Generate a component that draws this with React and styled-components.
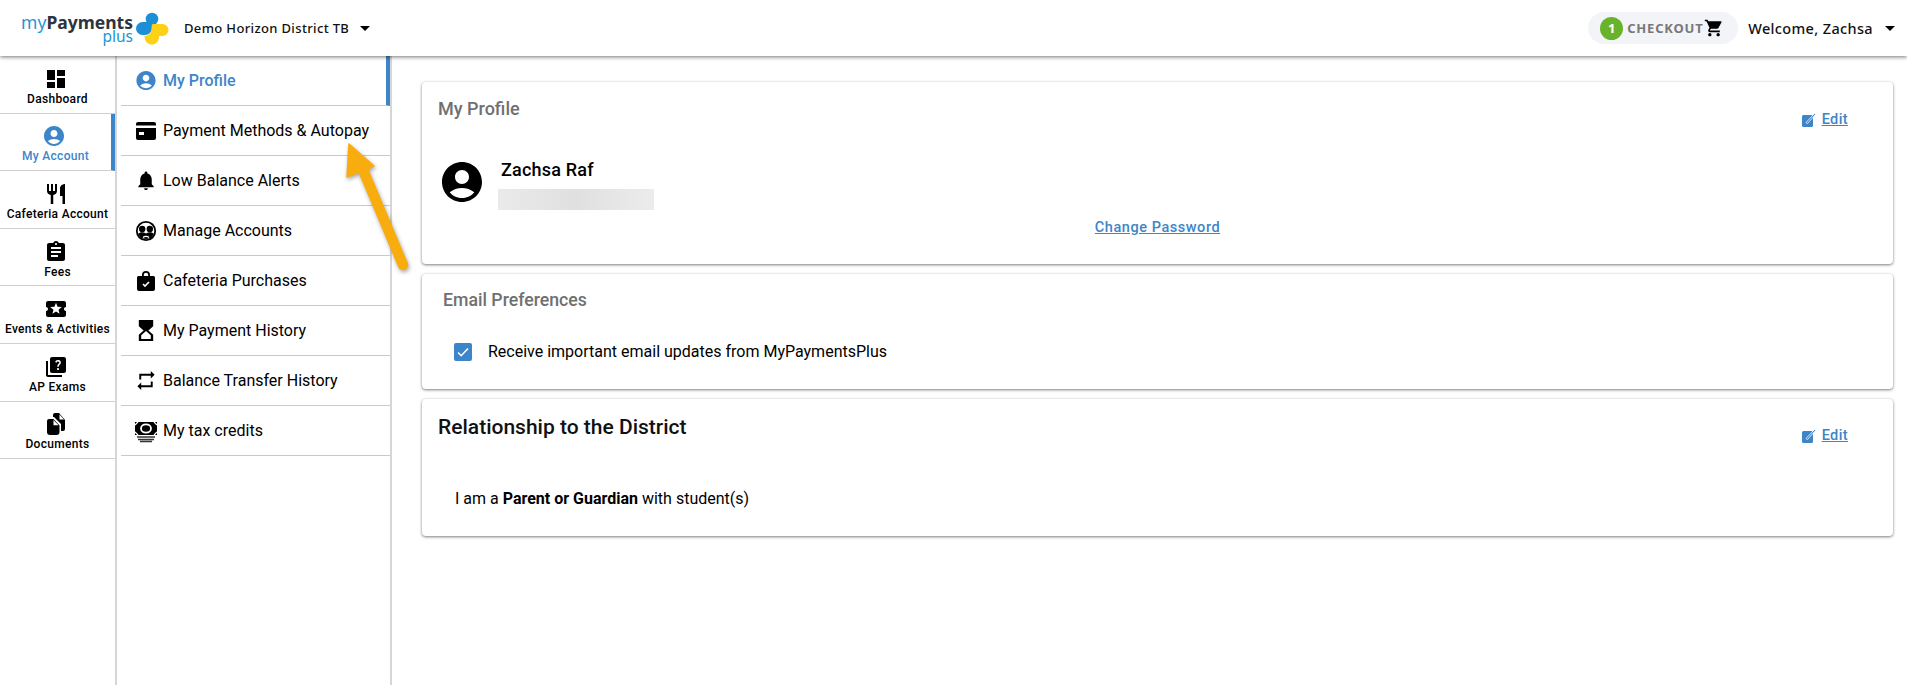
import React from 'react';
import styled, { createGlobalStyle } from 'styled-components';
import {
  MdDashboard,
  MdAccountCircle,
  MdRestaurant,
  MdAssignment,
  MdLocalActivity,
  MdQuiz,
  MdNotifications,
  MdHourglassTop,
  MdRepeat,
  MdShoppingCart,
  MdArrowDropDown,
} from 'react-icons/md';

const BLUE = '#3d85c9';

const GlobalStyle = createGlobalStyle`
  html, body {
    margin: 0;
    padding: 0;
    background: #fff;
    font-family: Roboto, "Liberation Sans", sans-serif;
    color: #000;
  }
  * {
    box-sizing: border-box;
  }
`;

const Page = styled.div`
  position: relative;
  width: 1907px;
  height: 685px;
  overflow: hidden;
  display: flex;
  flex-direction: column;
`;

const Header = styled.header`
  position: relative;
  z-index: 2;
  flex: 0 0 56px;
  display: flex;
  align-items: center;
  padding: 0 5px 0 18px;
  background: #fff;
  box-shadow: 0 1px 4px rgba(0, 0, 0, 0.55);
`;

const LogoWrap = styled.div`
  display: flex;
  align-items: center;
  width: 166px;
  gap: 2px;
`;

const LogoText = styled.div`
  display: flex;
  flex-direction: column;
  align-items: flex-end;
  width: 115px;
  margin-top: 1px;
  font-family: "Noto Sans", sans-serif;
`;

const LogoMain = styled.div`
  font-size: 17.5px;
  font-weight: 700;
  color: #2c3440;
  line-height: 16px;
  white-space: nowrap;

  & span {
    color: #1d96d6;
    font-weight: 400;
  }
`;

const LogoSub = styled.div`
  font-size: 15.5px;
  color: #1d96d6;
  line-height: 13px;
`;

const HeaderLabel = styled.span`
  font-family: "Noto Sans", sans-serif;
  font-size: ${(props) => props.$size || '13px'};
  font-weight: 500;
  letter-spacing: 0.35px;
  color: #111;
  white-space: nowrap;
`;

const Caret = styled(MdArrowDropDown)`
  font-size: 24px;
  margin-left: ${(props) => props.$gap || '5px'};
`;

const Spacer = styled.div`
  flex: 1;
`;

const CheckoutPill = styled.div`
  display: flex;
  align-items: center;
  width: 150px;
  height: 32px;
  padding-left: 12px;
  margin-right: 10px;
  border-radius: 16px;
  background: #f2f4f8;
`;

const CountBadge = styled.span`
  display: flex;
  align-items: center;
  justify-content: center;
  width: 23px;
  height: 23px;
  border-radius: 50%;
  background: #68b32a;
  color: #fff;
  font-size: 13px;
  font-weight: 700;
  font-family: "Noto Sans", sans-serif;
`;

const CheckoutText = styled.span`
  margin-left: 4px;
  font-size: 13px;
  font-weight: 700;
  letter-spacing: 0.8px;
  color: #78777a;
  font-family: "Noto Sans", sans-serif;
`;

const Body = styled.div`
  flex: 1;
  display: flex;
  min-height: 0;
`;

const Rail = styled.nav`
  flex: 0 0 117px;
  border-right: 2px solid #d6d6d6;
`;

const RailItem = styled.div`
  height: 57.6px;
  padding-top: 4px;
  display: flex;
  flex-direction: column;
  align-items: center;
  justify-content: center;
  gap: 1px;
  border-bottom: 1px solid #cfcfcf;
  border-right: ${(props) => (props.$active ? `4px solid ${BLUE}` : 'none')};
  color: ${(props) => (props.$active ? BLUE : '#000')};
  font-size: 12px;
  font-weight: 500;
  letter-spacing: 0.3px;
  white-space: nowrap;

  & svg {
    font-size: 24px;
    margin-right: 4px;
  }
`;

const SubNav = styled.nav`
  flex: 0 0 275px;
  padding-left: 4px;
  border-right: 2px solid #d6d6d6;
`;

const SubItem = styled.div`
  height: 50px;
  display: flex;
  align-items: center;
  gap: 5px;
  padding-left: 13px;
  border-bottom: 1px solid #c9c9c9;
  border-right: ${(props) => (props.$active ? `4px solid ${BLUE}` : 'none')};
  color: ${(props) => (props.$active ? BLUE : '#000')};
  font-size: 16px;
  font-weight: ${(props) => (props.$active ? 500 : 400)};

  & svg {
    flex: 0 0 24px;
    font-size: 23px;
  }
`;

const HistoryIcon = styled(MdHourglassTop)`
  transform: scale(1.25, 1.1);
`;

const Main = styled.main`
  flex: 1;
  display: flex;
  flex-direction: column;
  gap: 10px;
  padding: 26px 14px 0 30px;
`;

const Card = styled.section`
  position: relative;
  height: ${(props) => props.$height};
  padding: ${(props) => props.$padding || '16px 16px'};
  border-radius: 4px;
  background: #fff;
  box-shadow: 0 1px 3px rgba(0, 0, 0, 0.5), 0 0 2px rgba(0, 0, 0, 0.06);
`;

const CardTitle = styled.h2`
  margin: 0;
  font-size: ${(props) => props.$size || '18px'};
  line-height: 22px;
  font-weight: 500;
  color: ${(props) => props.$color || '#707070'};
`;

const EditLink = styled.a`
  position: absolute;
  top: ${(props) => props.$top};
  right: 45px;
  display: flex;
  align-items: center;
  gap: 6px;
  color: ${BLUE};
  font-size: 14.5px;
  font-weight: 500;
  letter-spacing: 0.4px;
  text-decoration: underline;
`;

const ProfileRow = styled.div`
  display: flex;
  align-items: flex-start;
  gap: 12px;
  margin-top: 38px;
`;

const AvatarIcon = styled(MdAccountCircle)`
  flex: 0 0 48px;
  font-size: 48px;
`;

const ProfileInfo = styled.div`
  padding-top: 1px;
`;

const ProfileName = styled.div`
  padding-left: 3px;
  font-size: 18px;
  font-weight: 500;
  line-height: 22px;
  letter-spacing: 0.2px;
`;

const RedactedBlock = styled.div`
  width: 156px;
  height: 21px;
  margin-top: 8px;
  background: linear-gradient(90deg, #eaeaea 0%, #e0e0e0 50%, #ececec 100%);
`;

const PasswordLink = styled.a`
  display: block;
  margin-top: 10px;
  text-align: center;
  line-height: 16px;
  color: ${BLUE};
  font-size: 14.5px;
  font-weight: 500;
  letter-spacing: 0.55px;
  text-decoration: underline;
`;

const CheckRow = styled.div`
  display: flex;
  align-items: center;
  gap: 16px;
  margin-top: 31px;
  padding-left: 11px;
  font-size: 16px;
  line-height: 20px;
`;

const CheckBox = styled.span`
  display: flex;
  align-items: center;
  justify-content: center;
  width: 18px;
  height: 18px;
  border-radius: 2px;
  background: ${BLUE};
`;

const RelationText = styled.p`
  margin: 51px 0 0 17px;
  font-size: 16px;
  line-height: 20px;

  & b {
    font-weight: 700;
  }
`;

// annotation drawn on top of the screenshot
const ArrowOverlay = styled.svg`
  position: absolute;
  left: 340px;
  top: 135px;
  width: 70px;
  height: 150px;
  z-index: 3;
  filter: drop-shadow(1px 2px 2px rgba(0, 0, 0, 0.35));
`;

function LogoMark() {
  return (
    <svg width="34" height="33" viewBox="0 0 34 33">
      <circle cx="17" cy="7" r="6.3" fill="#1d8fd6" />
      <path d="M1 16.5a6.5 6.5 0 0 1 6.5-6.5H17v6a7 7 0 0 1-7 7H7.5A6.5 6.5 0 0 1 1 16.5z" fill="#1d8fd6" />
      <path
        d="M19 12h8.5a6 6 0 0 1 0 12H24v1.5a7.2 7.2 0 0 1-14.4 0V24a7 7 0 0 0 7-7v-3a2 2 0 0 1 2.4-2z"
        fill="#fcd116"
      />
    </svg>
  );
}

function EditIcon() {
  return (
    <svg width="14" height="15" viewBox="0 0 14 15">
      <rect x="0" y="3" width="11" height="12" rx="1.5" fill={BLUE} />
      <path d="M4 10.5 L12.5 1.5 L13.5 2.5 L5.5 11.5 Z" fill={BLUE} stroke="#fff" strokeWidth="0.8" />
    </svg>
  );
}

function CardIcon() {
  return (
    <svg viewBox="0 0 24 24" width="24" height="24">
      <path
        d="M4 3h16a2 2 0 0 1 2 2v1.5H2V5a2 2 0 0 1 2-2zM2 9h20v10a2 2 0 0 1-2 2H4a2 2 0 0 1-2-2zM5 13v3h5v-3z"
        fill="#000"
        fillRule="evenodd"
      />
    </svg>
  );
}

function ManageIcon() {
  return (
    <svg viewBox="0 0 24 24" width="24" height="24">
      <circle cx="12" cy="12" r="9.2" fill="none" stroke="#000" strokeWidth="1.8" />
      <circle cx="8.2" cy="10" r="3.2" fill="#000" />
      <circle cx="15.8" cy="10" r="3.2" fill="#000" />
      <path d="M4 15c2-2 5-2.2 8-0.5 3-1.7 6-1.5 8 0.5l-3 4-5 1-5-1z" fill="#000" />
      <path d="M9 18.5c1.5-1.6 4.5-1.6 6 0" fill="none" stroke="#fff" strokeWidth="1.2" />
    </svg>
  );
}

function BagIcon() {
  return (
    <svg viewBox="0 0 24 24" width="24" height="24">
      <path
        d="M3 8.5a1.5 1.5 0 0 1 1.5-1.5H8V6a4 4 0 0 1 8 0v1h3.5A1.5 1.5 0 0 1 21 8.5V20a2 2 0 0 1-2 2H5a2 2 0 0 1-2-2zM9.8 7h4.4V6a2.2 2.2 0 0 0-4.4 0z"
        fill="#000"
        fillRule="evenodd"
      />
      <path d="M9 15l2 2 4-4" stroke="#fff" strokeWidth="1.6" fill="none" />
    </svg>
  );
}

function MoneyIcon() {
  return (
    <svg viewBox="0 0 24 24" width="24" height="24">
      <path d="M1 3h22v13H1z" fill="#000" />
      <ellipse cx="12" cy="9.5" rx="5" ry="4.2" fill="none" stroke="#fff" strokeWidth="1.8" />
      <path d="M1 6l3-3M23 6l-3-3M1 13l3 3M23 13l-3 3" stroke="#fff" strokeWidth="1.2" />
      <path d="M3 18h18M4 20.5h16M6 22.5h12" stroke="#333" strokeWidth="1.4" />
    </svg>
  );
}

function DocumentsIcon() {
  return (
    <svg viewBox="0 0 24 24" width="24" height="24">
      <path d="M9 3a2 2 0 0 1 2-2h2l2 0 6 7v9a2 2 0 0 1-2 2h-2v-7L10 5H9z" fill="#000" />
      <path d="M3 9a2 2 0 0 1 2-2h4.5l6 6.5V20a3 3 0 0 1-3 3H6a3 3 0 0 1-3-3z" fill="#000" />
      <path d="M15.5 2.5l4.5 5h-4.5z" fill="#fff" />
      <path d="M9.5 8l5 5.3H9.5z" fill="#fff" />
    </svg>
  );
}

const RAIL_ITEMS = [
  { label: 'Dashboard', Icon: MdDashboard },
  { label: 'My Account', Icon: MdAccountCircle, active: true },
  { label: 'Cafeteria Account', Icon: MdRestaurant },
  { label: 'Fees', Icon: MdAssignment },
  { label: 'Events & Activities', Icon: MdLocalActivity },
  { label: 'AP Exams', Icon: MdQuiz },
  { label: 'Documents', Icon: DocumentsIcon },
];

const SUB_ITEMS = [
  { label: 'My Profile', Icon: MdAccountCircle, active: true },
  { label: 'Payment Methods & Autopay', Icon: CardIcon },
  { label: 'Low Balance Alerts', Icon: MdNotifications },
  { label: 'Manage Accounts', Icon: ManageIcon },
  { label: 'Cafeteria Purchases', Icon: BagIcon },
  { label: 'My Payment History', Icon: HistoryIcon },
  { label: 'Balance Transfer History', Icon: MdRepeat },
  { label: 'My tax credits', Icon: MoneyIcon },
];

export default function App() {
  return (
    <Page>
      <GlobalStyle />
      <Header>
        <LogoWrap>
          <LogoText>
            <LogoMain>
              <span>my</span>Payments
            </LogoMain>
            <LogoSub>plus</LogoSub>
          </LogoText>
          <LogoMark />
        </LogoWrap>
        <HeaderLabel $size="13px">Demo Horizon District TB</HeaderLabel>
        <Caret $gap="4px" />
        <Spacer />
        <CheckoutPill>
          <CountBadge>1</CountBadge>
          <CheckoutText>CHECKOUT</CheckoutText>
          <MdShoppingCart size={20} />
        </CheckoutPill>
        <HeaderLabel $size="14.5px">Welcome, Zachsa</HeaderLabel>
        <Caret />
      </Header>
      <Body>
        <Rail>
          {RAIL_ITEMS.map(({ label, Icon, active }) => (
            <RailItem key={label} $active={active}>
              <Icon />
              {label}
            </RailItem>
          ))}
        </Rail>
        <SubNav>
          {SUB_ITEMS.map(({ label, Icon, active }) => (
            <SubItem key={label} $active={active}>
              <Icon />
              {label}
            </SubItem>
          ))}
        </SubNav>
        <Main>
          <Card $height="182px">
            <CardTitle>My Profile</CardTitle>
            <EditLink href="#" $top="29px">
              <EditIcon />
              Edit
            </EditLink>
            <ProfileRow>
              <AvatarIcon />
              <ProfileInfo>
                <ProfileName>Zachsa Raf</ProfileName>
                <RedactedBlock />
              </ProfileInfo>
            </ProfileRow>
            <PasswordLink href="#">Change Password</PasswordLink>
          </Card>
          <Card $height="115px" $padding="15px 21px">
            <CardTitle $size="17.7px">Email Preferences</CardTitle>
            <CheckRow>
              <CheckBox>
                <svg width="14" height="14" viewBox="0 0 14 14">
                  <path d="M2 7.5l3.2 3.2L12 3.5" stroke="#fff" strokeWidth="1.6" fill="none" />
                </svg>
              </CheckBox>
              Receive important email updates from MyPaymentsPlus
            </CheckRow>
          </Card>
          <Card $height="137px" $padding="17px 16px">
            <CardTitle $size="21px" $color="#111">
              Relationship to the District
            </CardTitle>
            <EditLink href="#" $top="28px">
              <EditIcon />
              Edit
            </EditLink>
            <RelationText>
              I am a <b>Parent or Guardian</b> with student(s)
            </RelationText>
          </Card>
        </Main>
      </Body>
      <ArrowOverlay viewBox="0 0 70 150">
        <path d="M21 30 L63 130" stroke="#f9ac0e" strokeWidth="10.5" strokeLinecap="round" />
        <path d="M9 9 L34 31 L7 42 Z" fill="#f9ac0e" stroke="#f9ac0e" strokeWidth="1.5" strokeLinejoin="round" />
      </ArrowOverlay>
    </Page>
  );
}
